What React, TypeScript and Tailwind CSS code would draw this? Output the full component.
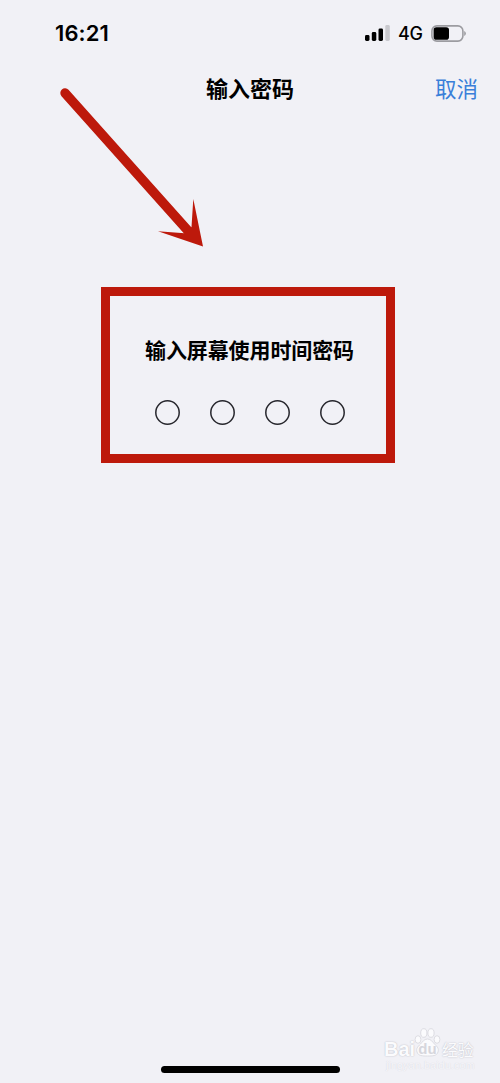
const signalBars = [
  { x: 0, height: 6, color: "#000" },
  { x: 6.8, height: 9, color: "#000" },
  { x: 13.5, height: 12.5, color: "#000" },
  { x: 20.3, height: 16, color: "#c9c9ce" },
];

const StatusBar = () => {
  return (
    <div className="flex h-[66px] items-center justify-between pl-[55px] pr-[33px]">
      <span className="font-['Inter'] text-[22px] leading-none font-semibold tracking-[0.1px]">
        16:21
      </span>
      <div className="flex items-center">
        <svg className="h-4 w-[25px]" viewBox="0 0 25 16">
          {signalBars.map((bar) => (
            <rect
              key={bar.x}
              x={bar.x}
              y={16 - bar.height}
              width="4.5"
              height={bar.height}
              rx="1.4"
              fill={bar.color}
            />
          ))}
        </svg>
        <span className="mt-0.5 ml-2 w-[26px] font-['Inter'] text-[18px] leading-none font-medium tracking-[-0.3px] whitespace-nowrap">
          4G
        </span>
        <svg className="ml-[7px] h-[17px] w-9" viewBox="0 0 36 17">
          <rect
            x="0.9"
            y="0.9"
            width="31"
            height="15.2"
            rx="5"
            fill="none"
            stroke="#9c9ca1"
            strokeWidth="1.6"
          />
          <rect x="2.6" y="2.3" width="15.4" height="12.4" rx="2.8" />
          <path d="M33.2 6a2.7 2.7 0 0 1 0 5z" fill="#9c9ca1" />
        </svg>
      </div>
    </div>
  );
};

const Header = () => {
  return (
    <header className="grid h-[43px] grid-cols-[1fr_auto_1fr] items-center px-[22px]">
      <h1 className="col-start-2 mb-0.5 text-[22px] leading-none font-bold">
        输入密码
      </h1>
      <button className="justify-self-end text-[21.5px] leading-none text-[#3a7fd9]">
        取消
      </button>
    </header>
  );
};

const PasscodeBox = () => {
  return (
    <section className="mt-[178px] ml-[101px] flex h-44 w-[294px] flex-col items-center border-9 border-[#bd190b]">
      <h2 className="mt-[43px] mr-[-3px] text-[21px] leading-none font-bold tracking-[-0.1px] whitespace-nowrap">
        输入屏幕使用时间密码
      </h2>
      <div className="mt-10 ml-1 flex gap-[30px]">
        {[0, 1, 2, 3].map((i) => (
          <svg key={i} className="size-[25px]" viewBox="0 0 25 25">
            <circle
              cx="12.5"
              cy="12.5"
              r="11.7"
              fill="none"
              stroke="#26262c"
              strokeWidth="1.5"
            />
          </svg>
        ))}
      </div>
    </section>
  );
};

const Arrow = () => {
  return (
    <svg
      className="absolute top-[80px] left-[50px] h-[175px] w-[165px]"
      viewBox="50 80 165 175"
      fill="#bd190b"
    >
      <path
        d="M65 93 190 233"
        stroke="#bd190b"
        strokeWidth="9.4"
        strokeLinecap="round"
      />
      <path d="M193.3 199 203 246.5 158 231.2 184.5 233.2 191.5 227z" />
    </svg>
  );
};

const Watermark = () => {
  return (
    <div className="absolute top-[1028px] left-[384px] w-[92px] text-[#fbfbfd] [text-shadow:0_0_1.5px_#aeaeb8]">
      <div className="flex h-[30px] items-end font-['Liberation_Sans'] leading-none">
        <span className="mb-[-1px] w-[30px] text-[20px] font-bold">Bai</span>
        <div className="relative h-[30px] w-[27px]">
          <svg
            className="size-full"
            viewBox="0 0 27 30"
            fill="#fbfbfd"
            stroke="#d6d6dc"
            strokeWidth="0.8"
          >
            <ellipse cx="4" cy="11.5" rx="2.9" ry="3.8" />
            <ellipse cx="9.8" cy="5" rx="3.1" ry="4.3" />
            <ellipse cx="17" cy="5" rx="3.1" ry="4.3" />
            <ellipse cx="23" cy="11.5" rx="2.9" ry="3.8" />
            <path d="M13.5 11c3.5 0 5 3 7 5 3 3 4.500 4.500 3.500 8-1.200 4-5.500 4-10.500 4s-9.300 0-10.500-4c-1-3.500.5-5 3.500-8 2-2 3.500-5 7-5z" />
          </svg>
          <span className="absolute inset-x-0 top-[13px] text-center text-[15px] leading-none font-bold text-[#d6d6dc] [text-shadow:none]">
            du
          </span>
        </div>
        <span className="ml-px font-['Noto_Sans_CJK_SC',sans-serif] text-[16px] leading-[17px] tracking-[-0.5px] whitespace-nowrap">
          经验
        </span>
      </div>
      <p className="mt-px ml-0.5 font-['Liberation_Sans'] text-[11px] leading-[13px] whitespace-nowrap text-[#f6f6fa] [text-shadow:0_0_1px_#d0d0d8]">
        jingyan.baidu.com
      </p>
    </div>
  );
};

const App = () => {
  return (
    <main className="relative flex h-[1083px] w-[500px] flex-col overflow-hidden bg-[#f1f1f6] font-['Noto_Sans_CJK_SC',sans-serif] text-black">
      <StatusBar />
      <Header />
      <PasscodeBox />
      <Arrow />
      <Watermark />
      <div className="mx-auto mt-auto mb-[10px] h-[7px] w-[179px] rounded-full bg-black" />
    </main>
  );
};

export default App;
